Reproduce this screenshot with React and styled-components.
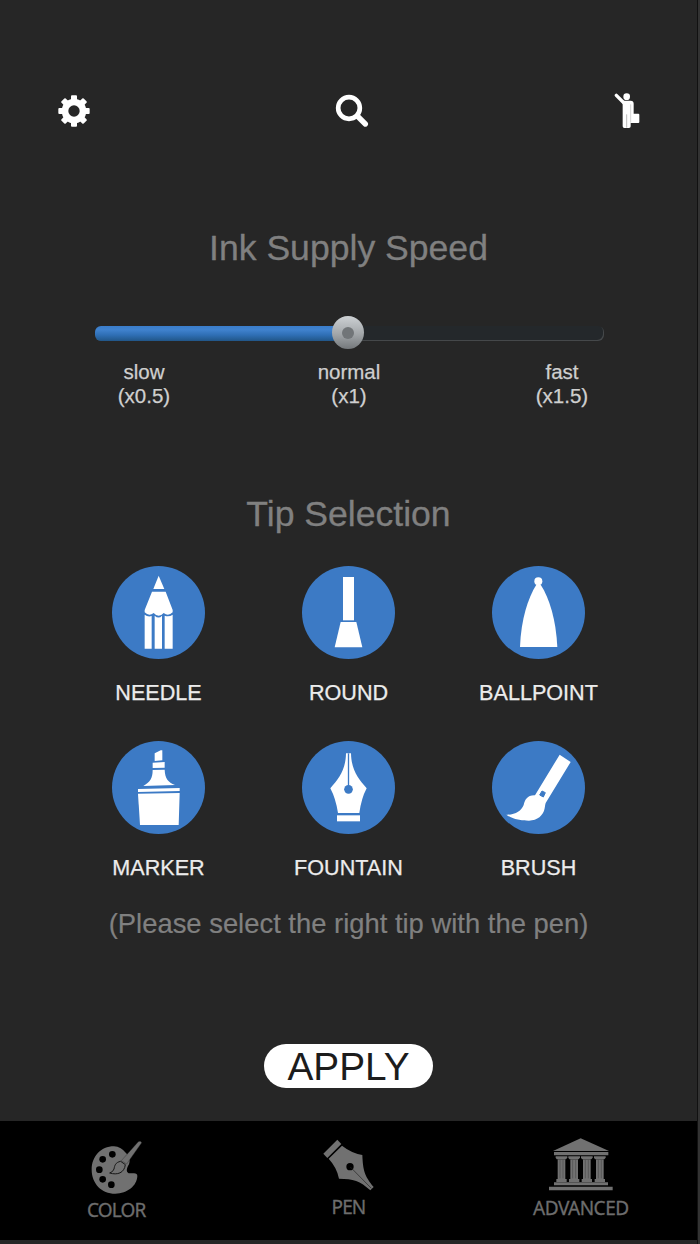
import { useState } from "react";
import styled, { createGlobalStyle } from "styled-components";

const tips = [
  { name: "NEEDLE", Icon: NeedleIcon },
  { name: "ROUND", Icon: RoundIcon },
  { name: "BALLPOINT", Icon: BallpointIcon },
  { name: "MARKER", Icon: MarkerIcon },
  { name: "FOUNTAIN", Icon: FountainIcon },
  { name: "BRUSH", Icon: BrushIcon },
];

const App = () => {
  const [speed] = useState(1);
  const percent = (speed - 0.5) * 100;

  return (
    <>
      <GlobalStyle />
      <Screen>
        <Header>
          <GearIcon />
          <SearchIcon />
          <GuideIcon />
        </Header>
        <SpeedSection>
          <SectionTitle>Ink Supply Speed</SectionTitle>
          <Track>
            <TrackFill style={{ width: `${percent}%` }} />
            <Thumb style={{ left: `${percent}%` }} />
          </Track>
          <SpeedLabels>
            <SpeedLabel>
              slow
              <br />
              (x0.5)
            </SpeedLabel>
            <SpeedLabel>
              normal
              <br />
              (x1)
            </SpeedLabel>
            <SpeedLabel>
              fast
              <br />
              (x1.5)
            </SpeedLabel>
          </SpeedLabels>
        </SpeedSection>
        <TipSection>
          <SectionTitle>Tip Selection</SectionTitle>
          <TipGrid>
            {tips.map(({ name, Icon }) => (
              <TipButton key={name}>
                <TipCircle>
                  <Icon />
                </TipCircle>
                <TipName>{name}</TipName>
              </TipButton>
            ))}
          </TipGrid>
          <Hint>(Please select the right tip with the pen)</Hint>
        </TipSection>
        <ApplyButton>APPLY</ApplyButton>
        <BottomNav>
          <NavItem $top={20}>
            <PaletteIcon />
            <NavLabel $gap={3} $spacing={-0.85}>
              COLOR
            </NavLabel>
          </NavItem>
          <NavItem $top={18}>
            <PenIcon />
            <NavLabel $gap={3} $spacing={-0.9}>
              PEN
            </NavLabel>
          </NavItem>
          <NavItem $top={17}>
            <BankIcon />
            <NavLabel $gap={4} $spacing={-0.5}>
              ADVANCED
            </NavLabel>
          </NavItem>
        </BottomNav>
      </Screen>
    </>
  );
};

function GearIcon() {
  return (
    <svg width="32" height="32" viewBox="-48 -48 96 96" fill="#fff">
      {[0, 45, 90, 135].map((angle) => (
        <rect
          key={angle}
          x="-9"
          y="-47"
          width="18"
          height="94"
          rx="3"
          transform={`rotate(${angle})`}
        />
      ))}
      <circle r="37" />
      <circle r="17" fill="#262626" />
    </svg>
  );
}

function SearchIcon() {
  return (
    <svg
      width="34"
      height="34"
      viewBox="45 42 102 102"
      fill="none"
      stroke="#fff"
    >
      <circle cx="87" cy="84" r="32.5" strokeWidth="14" />
      <path d="M112 108L136 132" strokeWidth="16" strokeLinecap="round" />
    </svg>
  );
}

function GuideIcon() {
  return (
    <svg width="26" height="36" viewBox="56 39 78 108" fill="#fff">
      <circle cx="94" cy="50" r="10" />
      <path
        d="M63 46L86 69"
        stroke="#fff"
        strokeWidth="10"
        strokeLinecap="round"
      />
      <path d="M82 62H106Q115 62 115 71V101H129Q132 101 132 104V126Q132 129 129 129H106V139Q106 144 101 144H87Q82 144 82 139V74Z" />
      <path d="M94 103V143" stroke="#999" strokeWidth="2" />
      <path d="M106 73V128" stroke="#bbb" strokeWidth="2" />
    </svg>
  );
}

function NeedleIcon() {
  return (
    <TipSvg viewBox="0 0 279 279">
      <path d="M140 29L157 69H124Z" />
      <path d="M120 77H161L182 132V139Q169 152 155 141Q140 158 125 141Q111 152 98 139V132Z" />
      <path d="M98 146Q108 154 119 150V248H98Z" />
      <path d="M128 149Q140 160 150 149V248H128Z" />
      <path d="M158 149Q171 154 182 146V248H158Z" />
    </TipSvg>
  );
}

function RoundIcon() {
  return (
    <TipSvg viewBox="0 0 279 279">
      <path d="M123 33H156V163H123Z" />
      <path d="M116 168H163L181 244H98Z" />
    </TipSvg>
  );
}

function BallpointIcon() {
  return (
    <TipSvg viewBox="0 0 279 279">
      <circle cx="139" cy="46" r="12" />
      <path d="M133 56H146C172 96 192 160 196 243H84C87 160 108 96 133 56Z" />
    </TipSvg>
  );
}

function MarkerIcon() {
  return (
    <TipSvg viewBox="0 0 279 279">
      <path d="M128 60V37L146 28H151V58Z" />
      <path d="M122 65L158 63V80L122 81Z" />
      <path d="M122 87L158 86C159 112 168 124 189 132L94 135C114 124 122 112 122 87Z" />
      <path d="M78 144L203 141V150L78 153Z" />
      <path d="M78 158L203 156L200 252H84Z" />
    </TipSvg>
  );
}

function FountainIcon() {
  return (
    <TipSvg viewBox="0 0 279 279">
      <path d="M132 37H147C148 88 169 112 194 142Q178 172 172 216H108Q101 172 85 142C110 112 131 88 132 37Z" />
      <path d="M139.5 37V140" stroke="#3c7ac5" strokeWidth="4" />
      <circle cx="139.5" cy="145" r="13" fill="#3c7ac5" />
      <path d="M105 223H174V241H105Z" />
    </TipSvg>
  );
}

function BrushIcon() {
  return (
    <TipSvg viewBox="0 0 279 279">
      <path d="M203 41L236 63L161 186C159 192 159 196 158 202C154 224 136 239 111 239C86 239 62 235 43 221C70 222 88 210 95 192C99 176 106 162 129 163Z" />
      <path
        d="M150 150L160 155L154 168L143 162Z"
        fill="#3c7ac5"
        stroke="#3c7ac5"
        strokeWidth="3"
        strokeLinejoin="round"
      />
    </TipSvg>
  );
}

function PaletteIcon() {
  return (
    <svg width="51" height="53" viewBox="93 123 153 159" fill="#717171">
      <path d="M162 139C122 139 95 170 95 209C95 250 124 281 166 281C202 281 231 257 232 228Q232 220 222 220H210C198 220 199 207 204 198C211 188 211 174 200 161Q183 140 162 139Z" />
      <g fill="#000">
        <circle cx="157" cy="163" r="10" />
        <circle cx="128" cy="178" r="10" />
        <circle cx="118" cy="209" r="10" />
        <circle cx="128" cy="238" r="10" />
        <circle cx="154" cy="254" r="10" />
      </g>
      <path
        d="M235 125Q242 121 245 128L200 192L184 182Z"
        stroke="#222"
        strokeWidth="1"
      />
      <path
        d="M182 184C166 187 164 197 162 207Q159 216 149 219C172 226 193 219 196 194Z"
        stroke="#171717"
        strokeWidth="3"
      />
    </svg>
  );
}

function PenIcon() {
  return (
    <svg width="51" height="52" viewBox="790 117 153 156" fill="#717171">
      <path d="M791 161L833 119L845 132L803 174Z" />
      <path d="M807 176L847 137Q875 159 908 165C910 211 914 227 942 261L932 271C901 242 881 237 838 236Q832 203 807 176Z" />
      <circle cx="871" cy="200" r="11" fill="#000" />
      <path d="M872 201L935 265" stroke="#222" strokeWidth="2" />
    </svg>
  );
}

function BankIcon() {
  return (
    <svg width="64" height="53" viewBox="148 113 192 159" fill="#717171">
      <path d="M243 114L328 152H160Z" />
      <path d="M163 155H326V165H163Z" />
      {[171, 209, 247, 286].map((x) => (
        <g key={x} transform={`translate(${x} 0)`}>
          <path d="M-3 168H32V172L28 177H0L-3 172Z" />
          <path d="M3 177H26V236H3Z" />
          <path d="M10 178V234M19 178V234" stroke="#4c4c4c" strokeWidth="2" />
          <path d="M-1 236H30V245H-1Z" />
        </g>
      ))}
      <path d="M163 246H325V255H163Z" />
      <path d="M148 259H339V270H148Z" />
    </svg>
  );
}

const GlobalStyle = createGlobalStyle`
  body {
    margin: 0;
    background-color: #333333;
    font-family: "Liberation Sans", Arial, sans-serif;
  }
`;

const Screen = styled.div`
  display: flex;
  flex-direction: column;
  width: 697px;
  height: 1244px;
  background-color: #262626;
  border-right: 1px solid #111111;
`;

const Header = styled.header`
  display: flex;
  flex-shrink: 0;
  justify-content: space-between;
  align-items: center;
  height: 36px;
  padding: 93px 57px 0 58px;
`;

const SectionTitle = styled.h1`
  margin: 0;
  font-size: 35.6px;
  font-weight: 400;
  line-height: 42px;
  text-align: center;
  color: #808080;
  -webkit-text-stroke: 0.3px #808080;
`;

const SpeedSection = styled.section`
  height: 266px;
  margin-top: 98px;
`;

const Track = styled.div`
  position: relative;
  box-sizing: border-box;
  width: 509px;
  height: 15px;
  margin: 57px 0 0 95px;
  border-radius: 6px;
  background-color: #24282b;
  box-shadow: inset -1px -1px 0 #45484a;
`;

const TrackFill = styled.div`
  height: 100%;
  border-radius: 6px 0 0 6px;
  background: linear-gradient(#3a7dcb, #4082ce 25%, #2f6fb5 60%, #215688);
`;

const Thumb = styled.div`
  position: absolute;
  top: -10px;
  display: flex;
  width: 32px;
  height: 33px;
  margin-left: -18px;
  border-radius: 50%;
  background: linear-gradient(#cdd1d4, #a2a6a9 55%, #74787b);

  &::after {
    content: "";
    width: 12px;
    height: 12px;
    margin: auto;
    border-radius: 50%;
    background-color: #717578;
  }
`;

const SpeedLabels = styled.div`
  display: grid;
  grid-template-columns: 98px 312px 114px;
  margin: 19px 0 0 95px;
`;

const SpeedLabel = styled.div`
  font-size: 20.5px;
  line-height: 24px;
  text-align: center;
  color: #cfcfcf;
  -webkit-text-stroke: 0.25px #cfcfcf;
`;

const TipSection = styled.section`
  height: 551px;
`;

const TipGrid = styled.div`
  display: grid;
  grid-template-columns: repeat(3, 190px);
  grid-auto-rows: 175px;
  justify-content: center;
  margin-top: 31px;
`;

const TipButton = styled.div`
  display: flex;
  flex-direction: column;
  align-items: center;
  cursor: pointer;
`;

const TipCircle = styled.div`
  width: 93px;
  height: 93px;
  border-radius: 50%;
  background-color: #3c7ac5;
`;

const TipSvg = styled.svg`
  display: block;
  width: 93px;
  height: 93px;
  fill: #ffffff;
`;

const TipName = styled.div`
  margin-top: 22px;
  font-size: 21.6px;
  line-height: 24px;
  color: #ececec;
  -webkit-text-stroke: 0.25px #ececec;
`;

const Hint = styled.p`
  margin: -8px 0 0;
  font-size: 27.4px;
  line-height: 32px;
  text-align: center;
  color: #808080;
  -webkit-text-stroke: 0.2px #808080;
`;

const ApplyButton = styled.button`
  flex-shrink: 0;
  align-self: center;
  width: 169px;
  height: 44px;
  padding: 2px 0 0;
  border: none;
  border-radius: 22px;
  background-color: #ffffff;
  color: #1c1c1c;
  font-family: inherit;
  font-size: 38.8px;
  line-height: 42px;
  cursor: pointer;
`;

const BottomNav = styled.nav`
  display: grid;
  flex-shrink: 0;
  grid-template-columns: repeat(3, 1fr);
  height: 119px;
  margin-top: 33px;
  background-color: #000000;
`;

const NavItem = styled.div`
  display: flex;
  flex-direction: column;
  align-items: center;
  padding-top: ${(props) => props.$top}px;
`;

const NavLabel = styled.span`
  margin-top: ${(props) => props.$gap}px;
  font-family: "Noto Sans", "Open Sans", sans-serif;
  font-size: 19px;
  line-height: 26px;
  letter-spacing: ${(props) => props.$spacing}px;
  color: #6d6d6d;
  -webkit-text-stroke: 0.3px #6d6d6d;
`;

export default App;
